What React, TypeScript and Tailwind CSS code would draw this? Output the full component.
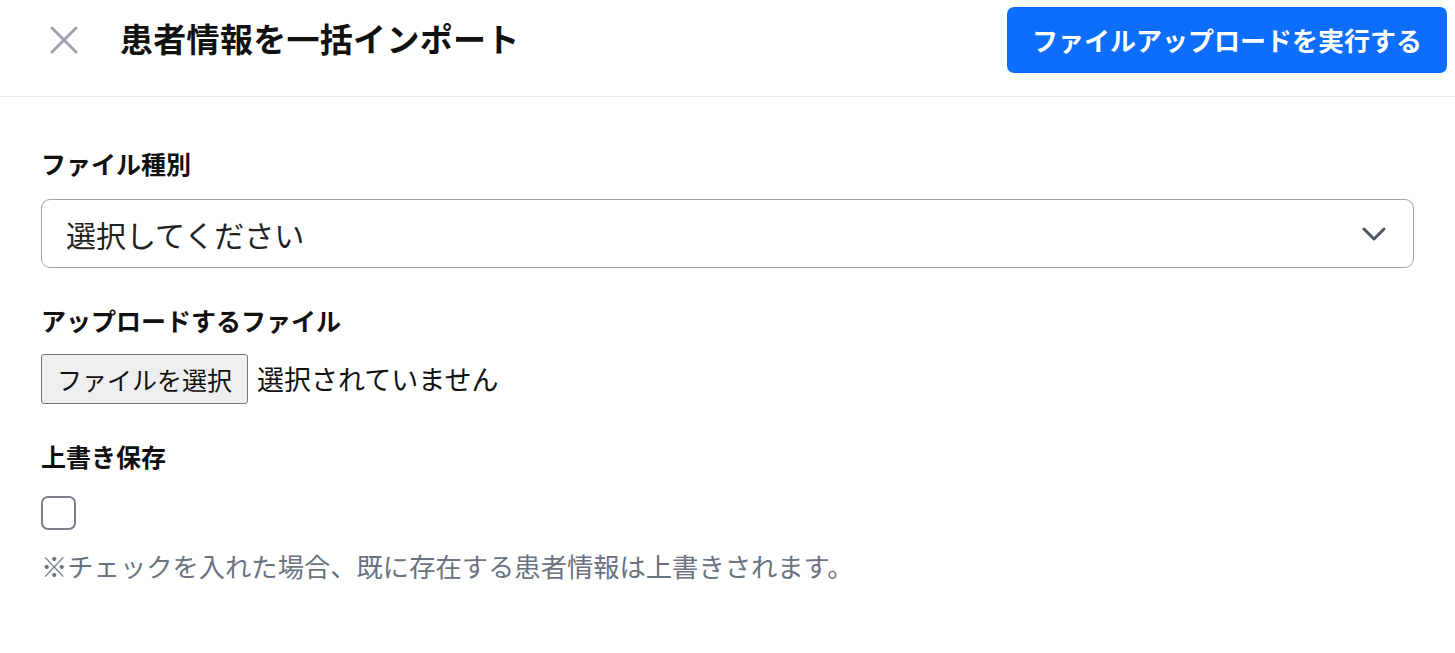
import { useState } from "react";

const font = { fontFamily: '"Noto Sans CJK JP", "Noto Sans", sans-serif' };

function CloseIcon() {
  return (
    <svg width="30" height="30" viewBox="0 0 30 30" fill="none" stroke="#9ca3af" strokeWidth="3" strokeLinecap="round">
      <path d="M3 3 L27 27 M27 3 L3 27" />
    </svg>
  );
}

function Chevron() {
  return (
    <svg width="24" height="14" viewBox="0 0 24 14" fill="none" stroke="#4b5563" strokeWidth="3" strokeLinecap="round" strokeLinejoin="round">
      <path d="M2 2 L12 12 L22 2" />
    </svg>
  );
}

export default function App() {
  const [overwrite, setOverwrite] = useState(false);

  return (
    <div className="min-h-screen bg-white text-[#111]" style={font}>
      <header className="flex h-[97px] items-start justify-between border-b border-[#ececec] pl-[49px] pr-[8px] pt-[7px]">
        <div className="flex h-[66px] items-center gap-[41px]">
          <button className="flex h-[30px] w-[30px] items-center justify-center">
            <CloseIcon />
          </button>
          <h1 className="mb-[4px] text-[33px] font-semibold leading-[40px] tracking-[0.3px]">患者情報を一括インポート</h1>
        </div>
        <button className="h-[66px] rounded-[7px] bg-[#0d6efd] px-[25px] text-[26px] font-semibold leading-[36px] text-white">
          ファイルアップロードを実行する
        </button>
      </header>

      <main className="px-[41px] pt-[48px]">
        <label className="block text-[25px] font-bold leading-[36px]">ファイル種別</label>
        <div className="mt-[18px] flex h-[69px] items-center justify-between rounded-[9px] border border-[#9ca3af] pl-[24px] pr-[27px]">
          <span className="text-[30px] leading-[40px] text-[#222]">選択してください</span>
          <Chevron />
        </div>

        <label className="mt-[34px] block text-[25px] font-bold leading-[36px]">アップロードするファイル</label>
        <div className="mt-[16px] flex items-center gap-[9px]">
          <button className="h-[50px] rounded-[3px] border border-[#767676] bg-[#efefef] px-[15px] text-[25px] leading-[36px] text-[#111]">
            ファイルを選択
          </button>
          <span className="text-[27px] leading-[36px]">選択されていません</span>
        </div>

        <label className="mt-[34px] block text-[25px] font-bold leading-[36px]">上書き保存</label>
        <button
          onClick={() => setOverwrite(!overwrite)}
          className="mt-[22px] block h-[34px] w-[35px] rounded-[7px] border-2 border-[#7b818c] bg-white"
          aria-pressed={overwrite}
        />
        <p className="mt-[18px] text-[26.3px] leading-[36px] text-[#6b7280]">
          ※チェックを入れた場合、既に存在する患者情報は上書きされます。
        </p>
      </main>
    </div>
  );
}
